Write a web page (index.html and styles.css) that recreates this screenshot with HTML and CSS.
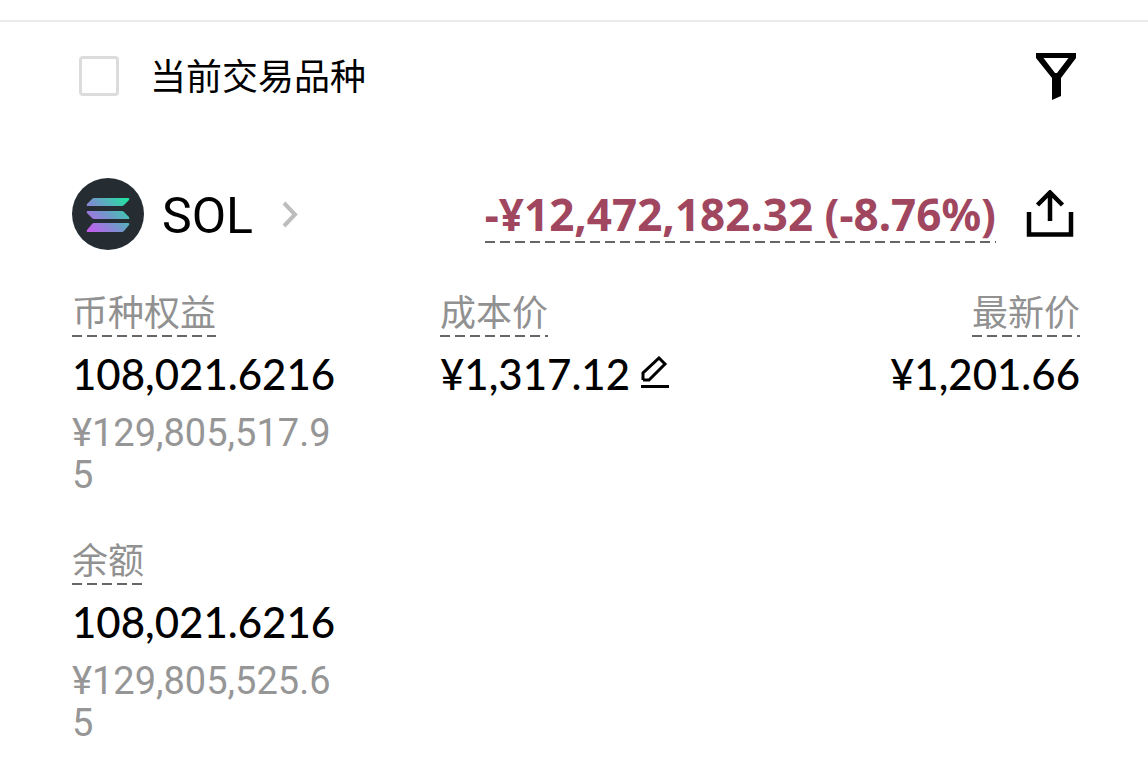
FILE: index.html
```
<!DOCTYPE html>
<html lang="zh-CN">
<head>
<meta charset="utf-8">
<meta name="viewport" content="width=device-width, initial-scale=1">
<title>SOL</title>
<link rel="stylesheet" href="styles.css">
</head>
<body>
<main class="panel">
  <div class="toolbar">
    <label class="check"><input class="check-box" type="checkbox"><span>当前交易品种</span></label>
    <button class="icon-button" type="button" aria-label="筛选">
      <svg width="48" height="48" viewBox="0 0 48 48"><path fill-rule="evenodd" d="M4 1H44V6L29 26V44L20 48V26L4 6ZM11.500 6L23 21H25L36.500 6Z"/></svg>
    </button>
  </div>
  <section class="asset">
    <header class="asset-head">
      <a class="coin" href="#">
        <svg class="coin-logo" viewBox="0 0 72 72" aria-hidden="true">
          <defs><linearGradient id="sol" gradientUnits="userSpaceOnUse" x1="18" y1="54" x2="54" y2="18"><stop offset="0" stop-color="#c45cf0"/><stop offset=".5" stop-color="#6d9bc8"/><stop offset="1" stop-color="#1ee8a0"/></linearGradient></defs>
          <circle cx="36" cy="36" r="36" fill="#252d33"/>
          <path fill="url(#sol)" d="M22 20H56Q58 20 57 22L52 27Q51 28 50 28H16Q14 28 15 26L20 21Q21 20 22 20ZM16 33H50Q51 33 52 34L57 39Q58 41 56 41H22Q21 41 20 40L15 35Q14 33 16 33ZM22 45H56Q58 45 57 47L52 53Q51 54 50 54H16Q14 54 15 52L20 46Q21 45 22 45Z"/>
        </svg>
        <span class="coin-name">SOL</span>
        <svg class="chevron" width="20" height="28" viewBox="0 0 20 28" aria-hidden="true"><path d="M3 3L14 14.500L3 26" fill="none" stroke="#bdbdbd" stroke-width="4"/></svg>
      </a>
      <div class="result">
        <span class="pnl dashed">-¥12,472,182.32 (-8.76%)</span>
        <button class="icon-button" type="button" aria-label="分享">
          <svg width="48" height="48" viewBox="0 0 48 48"><path d="M3 22V44.500H45V22M24 31V3M11.500 15L24 2.500L36.500 15" fill="none" stroke="#000" stroke-width="4.500"/></svg>
        </button>
      </div>
    </header>
    <dl class="stats">
      <div class="stat">
        <dt class="label dashed">币种权益</dt>
        <dd class="value">108,021.6216</dd>
        <dd class="sub">¥129,805,517.95</dd>
      </div>
      <div class="stat">
        <dt class="label dashed">成本价</dt>
        <dd class="value">¥1,317.12<button class="icon-button edit" type="button" aria-label="编辑"><svg width="30" height="36" viewBox="0 0 30 36"><path d="M3 24V17L19 2L25 8L9 24H3M1 30.500H29" fill="none" stroke="#000" stroke-width="3"/></svg></button></dd>
      </div>
      <div class="stat end">
        <dt class="label dashed">最新价</dt>
        <dd class="value">¥1,201.66</dd>
      </div>
      <div class="stat">
        <dt class="label dashed">余额</dt>
        <dd class="value">108,021.6216</dd>
        <dd class="sub">¥129,805,525.65</dd>
      </div>
    </dl>
  </section>
</main>
</body>
</html>
```
FILE: styles.css
```
* { box-sizing: border-box; }
body {
  margin: 0;
  padding-top: 20px;
  background: #fff;
  color: #000;
  font-family: Lato, "Noto Sans CJK SC", sans-serif;
}
.panel {
  border-top: 2px solid #ebebeb;
  padding: 30px 68px 0 72px;
}
.toolbar, .asset-head {
  display: flex;
  align-items: center;
  justify-content: space-between;
}
.check {
  display: flex;
  align-items: center;
  gap: 31px;
  padding-left: 7px;
  font-size: 36px;
  line-height: 48px;
}
.check-box {
  appearance: none;
  width: 40px;
  height: 40px;
  margin: 0;
  border: 3px solid #dcdcdc;
  border-radius: 4px;
}
.check-box:checked { background: #252d33; }
.icon-button {
  display: flex;
  padding: 0;
  border: 0;
  background: none;
}
.asset-head { margin-top: 78px; }
.coin {
  display: flex;
  align-items: center;
  color: inherit;
  text-decoration: none;
}
.coin-logo {
  width: 72px;
  height: 72px;
}
.coin-name {
  margin: 0 28px 0 18px;
  padding-top: 4px;
  font-family: Roboto, sans-serif;
  font-size: 50px;
  line-height: 68px;
}
.result {
  display: flex;
  align-items: center;
  gap: 30px;
  padding-right: 6px;
}
.dashed {
  background: repeating-linear-gradient(90deg, #666 0 10px, transparent 10px 15px) left bottom / 100% 2px no-repeat;
}
.pnl {
  padding: 4px 0;
  color: #a0465f;
  font-family: "Noto Sans", sans-serif;
  font-size: 44px;
  font-weight: 700;
  line-height: 50px;
}
.stats {
  display: grid;
  grid-template-columns: repeat(3, 1fr);
  gap: 40px 96px;
  margin: 38px 0 0;
}
.stat {
  display: flex;
  flex-direction: column;
  align-items: flex-start;
}
.end { align-items: flex-end; }
.label {
  padding-bottom: 1px;
  color: #919191;
  font-size: 36px;
  line-height: 48px;
}
.value {
  display: flex;
  align-items: center;
  gap: 10px;
  margin: 12px 0 13px;
  font-size: 42px;
  font-weight: 500;
  line-height: 50px;
}
.sub {
  margin: 0;
  color: #969696;
  font-family: Roboto, sans-serif;
  font-size: 38px;
  line-height: 42px;
  word-break: break-all;
}
```
